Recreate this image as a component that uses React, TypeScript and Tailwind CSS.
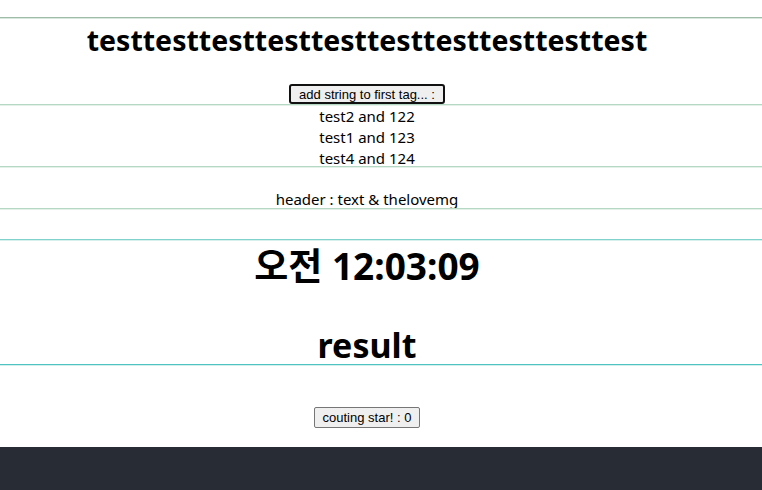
import React from "react";

export default function App() {
  return (
    <div className="w-[762px] h-[490px] bg-white flex flex-col overflow-hidden font-['Noto_Sans','Noto_Sans_CJK_KR',sans-serif] text-black">
      <div className="h-[17px] shrink-0" />
      <div className="h-[2px] shrink-0 w-full bg-[#9fbca9] border-b border-[#d9e8de]" />
      <div className="pr-[28px] flex justify-center h-[42px] items-center shrink-0">
        <h1 className="text-[28.5px] font-bold leading-none">testtesttesttesttesttesttesttesttesttest</h1>
      </div>
      <div className="pr-[28px] flex justify-center mt-[23px] shrink-0">
        <button className="h-[20px] px-[8px] border-2 border-[#111] rounded-[3px] bg-[#efefef] font-['Liberation_Sans',sans-serif] text-[13px] leading-none">
          add string to first tag... :
        </button>
      </div>
      <div className="h-[2px] shrink-0 w-full bg-[#b5d8c4] border-b border-[#e3f1e9]" />
      <div className="pr-[28px] flex flex-col items-center text-[15px] leading-[21px] h-[60px] shrink-0">
        <div>test2 and 122</div>
        <div>test1 and 123</div>
        <div>test4 and 124</div>
      </div>
      <div className="h-[2px] shrink-0 w-full bg-[#b5d8c4] border-b border-[#e3f1e9]" />
      <div className="pr-[28px] flex justify-center items-end text-[15px] leading-[17px] h-[40px] shrink-0">
        header : text &amp; thelovemg
      </div>
      <div className="h-[2px] shrink-0 w-full bg-[#b5d8c4] border-b border-[#e3f1e9]" />
      <div className="h-[29px] shrink-0" />
      <div className="h-[2px] shrink-0 w-full bg-[#7fd3cc] border-b border-[#d7f0ee]" />
      <div className="pr-[28px] flex justify-center h-[48px] items-center shrink-0">
        <div className="text-[37px] font-bold leading-none">오전 12:03:09</div>
      </div>
      <div className="pr-[28px] flex justify-center h-[75px] items-end pb-[2px] shrink-0">
        <div className="text-[34px] font-bold leading-none">result</div>
      </div>
      <div className="h-[2px] shrink-0 w-full bg-[#4fc3c0] border-b border-[#d3efed]" />
      <div className="pr-[28px] flex justify-center mt-[41px] shrink-0">
        <button className="h-[21px] px-[8px] border border-[#767676] rounded-[2px] bg-[#efefef] font-['Liberation_Sans',sans-serif] text-[13px] leading-none">
          couting star! : 0
        </button>
      </div>
      <div className="flex-1" />
      <div className="h-[43px] shrink-0 bg-[#282c34]" />
    </div>
  );
}
